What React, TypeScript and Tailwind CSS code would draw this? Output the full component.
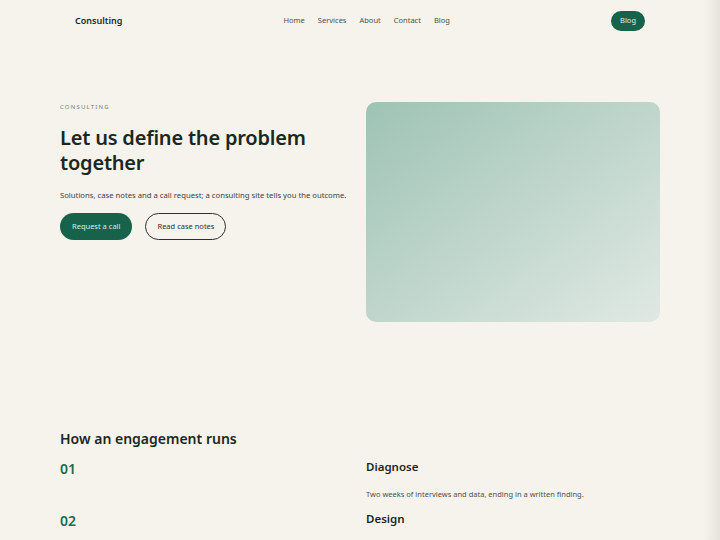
export default function App() {
  const navLinks = ['Home', 'Services', 'About', 'Contact', 'Blog'];
  const steps = [
    { num: '01', title: 'Diagnose', text: 'Two weeks of interviews and data, ending in a written finding.' },
    { num: '02', title: 'Design', text: '' },
  ];

  return (
    <div className="min-h-screen bg-[#f6f3ec] text-[#1b2723] font-['Noto_Sans','Liberation_Sans',sans-serif]">
      <div className="w-[600px] mx-auto">
        {/* nav */}
        <header className="h-[42px] px-[15px] flex items-center justify-between">
          <span className="text-[9px] font-semibold">Consulting</span>
          <nav className="flex gap-[13px] text-[7.5px] text-[#4a4f4c]">
            {navLinks.map((l) => (
              <a key={l} href="#">{l}</a>
            ))}
          </nav>
          <button className="h-[20px] px-[9px] rounded-full bg-[#17624a] text-[#e3efe9] text-[7.5px]">Blog</button>
        </header>

        {/* hero */}
        <section className="pt-[60px] grid grid-cols-2 gap-3 items-start">
          <div>
            <p className="text-[6px] leading-[10px] tracking-[0.2em] text-[#7a7d78]">CONSULTING</p>
            <h1 className="mt-[13px] text-[20px] leading-[25px] font-semibold tracking-[-0.01em]">
              Let us define the problem together
            </h1>
            <p className="mt-[14px] text-[7.7px] leading-[12px] text-[#3b413e]">
              Solutions, case notes and a call request; a consulting site tells you the outcome.
            </p>
            <div className="mt-[12px] flex gap-[13px]">
              <button className="h-[27px] px-[12px] rounded-full bg-[#17624a] text-[#dcece5] text-[7.5px]">
                Request a call
              </button>
              <button className="h-[27px] px-[11px] rounded-full border border-[#2c2f2d] text-[#2c2f2d] text-[7.5px]">
                Read case notes
              </button>
            </div>
          </div>
          <div className="h-[220px] rounded-[10px] bg-gradient-to-br from-[#9ec3b4] to-[#e0e9e4]" />
        </section>

        {/* steps */}
        <section className="mt-[107px]">
          <h2 className="text-[14px] leading-[20px] font-semibold">How an engagement runs</h2>
          <div className="mt-[10px] flex flex-col gap-[11px]">
            {steps.map((s) => (
              <div key={s.num} className="grid grid-cols-2 gap-3">
                <span className="text-[14px] leading-[20px] font-semibold text-[#1d6a50]">{s.num}</span>
                <div>
                  <h3 className="text-[11.5px] leading-[16px] font-semibold">{s.title}</h3>
                  {s.text && <p className="mt-[13px] text-[7.5px] leading-[12px] text-[#4a4f4c]">{s.text}</p>}
                </div>
              </div>
            ))}
          </div>
        </section>
      </div>
      <div className="fixed inset-y-0 right-0 w-[16px] bg-gradient-to-r from-transparent to-[#e6e3dc] pointer-events-none" />
    </div>
  );
}
